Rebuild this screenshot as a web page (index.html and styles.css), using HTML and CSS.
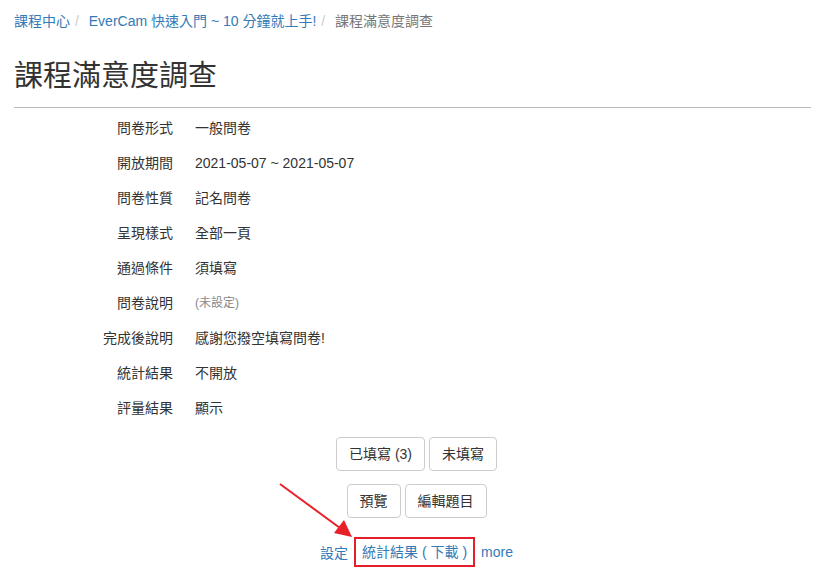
FILE: index.html
```html
<!DOCTYPE html>
<html lang="zh-Hant">
<head>
<meta charset="utf-8">
<link rel="stylesheet" href="styles.css">
</head>
<body>
<div class="page">
  <nav class="crumbs">
    <a href="#">課程中心</a><span class="sep">/</span>
    <a href="#">EverCam 快速入門 ~ 10 分鐘就上手!</a><span class="sep">/</span>
    <span class="current">課程滿意度調查</span>
  </nav>
  <h1 class="title">課程滿意度調查</h1>
  <div class="info">
    <div class="lbl">問卷形式</div><div class="val">一般問卷</div>
    <div class="lbl">開放期間</div><div class="val">2021-05-07 ~ 2021-05-07</div>
    <div class="lbl">問卷性質</div><div class="val">記名問卷</div>
    <div class="lbl">呈現樣式</div><div class="val">全部一頁</div>
    <div class="lbl">通過條件</div><div class="val">須填寫</div>
    <div class="lbl">問卷說明</div><div class="val muted">(未設定)</div>
    <div class="lbl">完成後說明</div><div class="val">感謝您撥空填寫問卷!</div>
    <div class="lbl">統計結果</div><div class="val">不開放</div>
    <div class="lbl">評量結果</div><div class="val">顯示</div>
  </div>
  <div class="actions">
    <div class="btnrow">
      <button class="btn">已填寫 (3)</button>
      <button class="btn">未填寫</button>
    </div>
    <div class="btnrow second">
      <button class="btn">預覽</button>
      <button class="btn">編輯題目</button>
    </div>
    <div class="links">
      <a href="#">設定</a>
      <a href="#" class="boxed">統計結果 ( 下載 )</a>
      <a href="#">more</a>
      <svg class="arrow" width="90" height="70" viewBox="0 0 90 70">
        <line x1="2" y1="2" x2="62" y2="46" stroke="#e8202a" stroke-width="2"/>
        <polygon points="74,55 56,51 66,38" fill="#e8202a"/>
      </svg>
    </div>
  </div>
</div>
</body>
</html>
```
FILE: styles.css
```css
* { box-sizing: border-box; }
body {
  margin: 0;
  background: #fff;
  font-family: "Liberation Sans", Arial, "Noto Sans CJK TC", sans-serif;
  font-size: 14px;
  color: #333;
}
.page {
  width: 805px;
  margin-left: 14px;
}
.crumbs {
  padding-top: 12px;
  height: 30px;
  font-size: 14px;
  line-height: 18px;
}
.crumbs a { color: #337ab7; text-decoration: none; }
.crumbs .sep { color: #ccc; padding: 0 6px 0 5px; }
.crumbs .current { color: #777; }
.title {
  margin: 26px 8px 0 0;
  padding-bottom: 11px;
  font-size: 29px;
  font-weight: normal;
  line-height: 40px;
  color: #333;
  border-bottom: 1px solid #bbb;
}
.info {
  display: grid;
  grid-template-columns: 159px 1fr;
  column-gap: 22px;
  padding-top: 3px;
  line-height: 35px;
}
.lbl { text-align: right; color: #333; }
.val { color: #333; }
.val.muted { color: #888; font-size: 12px; }
.actions {
  display: flex;
  flex-direction: column;
  align-items: center;
  padding-top: 11px;
}
.btnrow { display: flex; gap: 4px; }
.btnrow.second { margin-top: 13px; }
.btn {
  font-family: inherit;
  font-size: 14px;
  color: #333;
  background: #fff;
  border: 1px solid #ccc;
  border-radius: 4px;
  height: 34px;
  padding: 0 12px;
  line-height: 32px;
}
.links {
  position: relative;
  display: flex;
  align-items: center;
  gap: 6px;
  margin-top: 19px;
  font-size: 14px;
}
.links a { color: #337ab7; text-decoration: none; }
.links .boxed {
  border: 2px solid #e3202a;
  padding: 0 6px;
  line-height: 26px;
}
.arrow {
  position: absolute;
  left: -42px;
  top: -55px;
}
```
